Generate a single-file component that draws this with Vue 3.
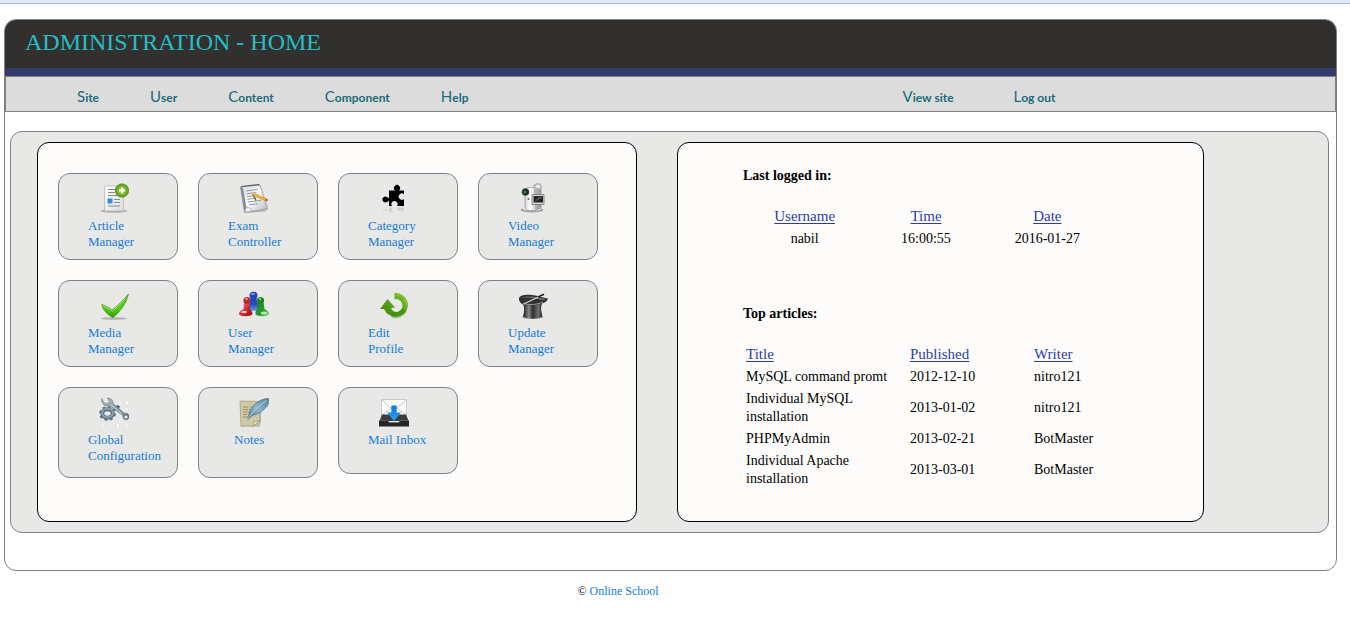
<script setup>
const mainMenu = ['Site', 'User', 'Content', 'Component', 'Help']
const sideMenu = ['View site', 'Log out']

const cards = [
  { icon: 'article', lines: ['Article', 'Manager'] },
  { icon: 'exam', lines: ['Exam', 'Controller'] },
  { icon: 'puzzle', lines: ['Category', 'Manager'] },
  { icon: 'video', lines: ['Video', 'Manager'] },
  { icon: 'check', lines: ['Media', 'Manager'] },
  { icon: 'users', lines: ['User', 'Manager'] },
  { icon: 'refresh', lines: ['Edit', 'Profile'] },
  { icon: 'hat', lines: ['Update', 'Manager'] },
  { icon: 'tools', lines: ['Global', 'Configuration'], tall: true },
  { icon: 'notes', lines: ['Notes'], tall: true, inset: true },
  { icon: 'inbox', lines: ['Mail Inbox'] },
]

const logins = [{ user: 'nabil', time: '16:00:55', date: '2016-01-27' }]

const articles = [
  { title: 'MySQL command promt', published: '2012-12-10', writer: 'nitro121' },
  { title: 'Individual MySQL installation', published: '2013-01-02', writer: 'nitro121' },
  { title: 'PHPMyAdmin', published: '2013-02-21', writer: 'BotMaster' },
  { title: 'Individual Apache installation', published: '2013-03-01', writer: 'BotMaster' },
]
</script>

<template>
  <div class="page">
    <svg class="sprite" width="0" height="0" aria-hidden="true">
      <defs>
        <linearGradient id="g-paper" x1="0" y1="0" x2="1" y2="1">
          <stop offset="0" stop-color="#ffffff" /><stop offset="1" stop-color="#dcdcde" />
        </linearGradient>
        <linearGradient id="g-pad" x1="0" y1="0" x2="1" y2="1">
          <stop offset="0" stop-color="#d4d6da" /><stop offset="0.5" stop-color="#fafafa" /><stop offset="1" stop-color="#b4bac0" />
        </linearGradient>
        <radialGradient id="g-add" cx="0.5" cy="0.5" r="0.5">
          <stop offset="0" stop-color="#c4e67c" /><stop offset="0.6" stop-color="#7cb82c" /><stop offset="1" stop-color="#4f8f14" />
        </radialGradient>
        <linearGradient id="g-check" x1="0" y1="0" x2="0" y2="1">
          <stop offset="0" stop-color="#4fb81a" /><stop offset="0.6" stop-color="#58cf18" /><stop offset="1" stop-color="#2f9a08" />
        </linearGradient>
        <linearGradient id="g-cam" x1="0" y1="0" x2="1" y2="0">
          <stop offset="0" stop-color="#c4c4c4" /><stop offset="0.4" stop-color="#ffffff" /><stop offset="1" stop-color="#a8a8a8" />
        </linearGradient>
        <linearGradient id="g-red" x1="0" y1="0" x2="1" y2="1">
          <stop offset="0" stop-color="#f09090" /><stop offset="0.5" stop-color="#c83038" /><stop offset="1" stop-color="#8c1018" />
        </linearGradient>
        <linearGradient id="g-green" x1="0" y1="0" x2="1" y2="1">
          <stop offset="0" stop-color="#1c7a1c" /><stop offset="0.6" stop-color="#2c9c2c" /><stop offset="1" stop-color="#90d888" />
        </linearGradient>
        <linearGradient id="g-blue" x1="0" y1="0" x2="0" y2="1">
          <stop offset="0" stop-color="#1c3cb0" /><stop offset="0.5" stop-color="#2c50c0" /><stop offset="1" stop-color="#5c9cf0" />
        </linearGradient>
        <linearGradient id="g-ring" x1="1" y1="0" x2="0" y2="1">
          <stop offset="0" stop-color="#7cc428" /><stop offset="1" stop-color="#3c8010" />
        </linearGradient>
        <linearGradient id="g-hat" x1="0" y1="0" x2="1" y2="0">
          <stop offset="0" stop-color="#141414" /><stop offset="0.3" stop-color="#8a8a8a" /><stop offset="0.5" stop-color="#303030" /><stop offset="0.8" stop-color="#707070" /><stop offset="1" stop-color="#101010" />
        </linearGradient>
        <linearGradient id="g-steel" x1="0" y1="0" x2="1" y2="1">
          <stop offset="0" stop-color="#b8c4cc" /><stop offset="1" stop-color="#5c7080" />
        </linearGradient>
        <linearGradient id="g-feather" x1="1" y1="0" x2="0" y2="1">
          <stop offset="0" stop-color="#52809c" /><stop offset="0.5" stop-color="#8cb4cc" /><stop offset="1" stop-color="#4c7894" />
        </linearGradient>
        <linearGradient id="g-arrow" x1="0" y1="0" x2="0" y2="1">
          <stop offset="0" stop-color="#1478d0" /><stop offset="1" stop-color="#28a0f8" />
        </linearGradient>
      </defs>

      <symbol id="icon-article" viewBox="0 0 30 30">
        <ellipse cx="15" cy="28" rx="13.5" ry="1.8" fill="#999" opacity=".65" />
        <path d="M5.5 3h19v25h-19z" fill="url(#g-paper)" stroke="#b0b0b0" stroke-width=".7" />
        <path d="M9 6.5h8M9 9.5h7M9 12.5h12M15 16.5h6M15 19.5h6M9 23h12" stroke="#8c8c8c" />
        <path d="M8.5 15.5h5v5h-5z" fill="#2e8ee0" />
        <circle cx="23" cy="7.5" r="6.8" fill="url(#g-add)" stroke="#5c9820" stroke-width=".6" />
        <path d="M23 4.500v6M20 7.500h6" stroke="#fff" stroke-width="2" />
      </symbol>

      <symbol id="icon-exam" viewBox="0 0 30 30">
        <path d="M4 28.500 29 26l-3 2.500L6 30z" fill="#999" opacity=".6" />
        <path d="M1.500 4 21 2l7.500 23.500-9 2L5.500 29z" fill="url(#g-pad)" stroke="#8c9298" stroke-width=".8" />
        <path d="M1.500 4 5.500 29l2-4L4 5z" fill="#858c94" />
        <path d="M7.500 24c3 0 5 2 5.500 4.500L5.500 29z" fill="#eef0f2" stroke="#8c9298" stroke-width=".6" />
        <path d="m7 8 11.500-1.500M7.500 10.800l10-1.300M8 13.500l12-1.500M8.500 16.300l8-1M9 19l13-1.600M10 21.800l9-1" stroke="#8a9096" stroke-width=".9" />
        <path d="M2 3.500 20.500 1.500" stroke="#5c6268" stroke-width="1.200" />
        <path d="m14 11.500 3 6" stroke="#50565c" stroke-width="1.300" />
        <path d="m13 11 2.800-.2L28 16.200l-.8 1.800L15 13z" fill="#f8b828" stroke="#c88414" stroke-width=".5" />
        <path d="m26.800 15.700 2.200.9-.8 1.900-2.200-.9z" fill="#d84c28" />
      </symbol>

      <symbol id="icon-puzzle" viewBox="0 0 30 30">
        <path d="M10 7.500h6.200A3 3 0 1 1 19.800 7.500H25v3.700A3.200 3.200 0 1 0 25 16v7h-7A3.100 3.100 0 1 0 13 23h-3v-5.500c-.8.500-1 1.500-3 1.800A2.900 2.900 0 1 1 7 13.700c1.800.2 2 1.300 3 1.300z" fill="#000" />
        <path d="M10 24.500h3v4h-3zM18 24.500h7v3h-7z" fill="#999" opacity=".3" />
        <path d="M4 26.500h4v1.500H4zM12 28.500h3v1h-3z" fill="#999" opacity=".25" />
      </symbol>

      <symbol id="icon-video" viewBox="0 0 30 30">
        <ellipse cx="13" cy="27" rx="11.500" ry="2.500" fill="#8c8c8c" opacity=".75" />
        <ellipse cx="13" cy="26" rx="9" ry="1.800" fill="#f0f0f0" />
        <circle cx="18.500" cy="4.500" r="4" fill="#c8c8c8" stroke="#999" stroke-width=".7" />
        <circle cx="19" cy="3.500" r="1.800" fill="#f0f0f0" />
        <path d="M4 7.500C6 4.500 11 4 16 5l6 2v18l-6 2.500H8L6 24V13z" fill="url(#g-cam)" stroke="#909090" stroke-width=".7" />
        <path d="m15 6 7 1.500V25l-6 2.500z" fill="#909090" opacity=".5" />
        <circle cx="6.500" cy="9" r="3.600" fill="#202420" stroke="#777" stroke-width=".5" />
        <circle cx="6" cy="9" r="1.600" fill="#2c8c3c" />
        <circle cx="9.500" cy="16" r="1" fill="#666" />
        <path d="M13 11.500h12v10H13z" fill="#d8d8d8" stroke="#666" stroke-width=".7" />
        <path d="M14.500 13h9.500v6.500h-9.500z" fill="#262626" />
        <path d="m15.500 19 4-5h4z" fill="#5a5a5a" />
      </symbol>

      <symbol id="icon-check" viewBox="0 0 30 30">
        <ellipse cx="15" cy="28.500" rx="13" ry="1.300" fill="#888" opacity=".55" />
        <path d="M2.800 14.500C6.500 15.500 10 17.500 13 20 18 16.500 24 10.500 29.500 4 27.500 13 21.500 21.500 14 27.700 8.500 24.500 4 20.500 2.800 14.500z" fill="url(#g-check)" stroke="#388c10" stroke-width=".6" />
        <path d="M4 15.800c3.500 1 6.500 3 9.200 5.400C18 17.500 22.500 13 27 8" fill="none" stroke="#b4ec80" stroke-width=".8" />
      </symbol>

      <symbol id="icon-users" viewBox="0 0 30 30">
        <path d="M11.500 8h6l.5 4 4.500 7c-2 2.500-13 2.500-15.500 0l4-7z" fill="url(#g-blue)" />
        <ellipse cx="14.500" cy="5.500" rx="4" ry="3.700" fill="#2444b4" />
        <ellipse cx="14" cy="4" rx="2" ry="1" fill="#7ca0f0" />
        <path d="M5 12.500 4.500 19C1 20.500 0 22.500 0 24c1 3 12 3 13.500 0 0-2-1-4-2.500-5v-6.500z" fill="url(#g-red)" />
        <circle cx="8" cy="10.500" r="3.600" fill="#b42832" />
        <path d="M18.500 12.500V19c-1.500 1-2.500 3-2 5 1.500 3 12.500 3 13.500 0-.2-2-1.500-3.500-4.500-5l-1-6.500z" fill="url(#g-green)" />
        <circle cx="21.500" cy="10.500" r="3.600" fill="#1e8524" />
        <circle cx="7.500" cy="9" r="1.200" fill="#f0a0a0" />
        <circle cx="21" cy="9" r="1.200" fill="#84d080" />
        <ellipse cx="5" cy="22" rx="3" ry="1.300" fill="#f4b4b4" />
        <ellipse cx="25" cy="23" rx="3" ry="1.500" fill="#b0e8a4" />
      </symbol>

      <symbol id="icon-refresh" viewBox="0 0 30 30">
        <path d="M15.500 3C23 2.500 29 8.500 29 15.500a12.500 12.500 0 0 1-24 3.500H1l7.500-10L16 17.500l-4 .5c1 2.500 3 4 5 4a6.500 6.500 0 0 0 0-13l-1.500.2z" fill="url(#g-ring)" />
        <path d="M16.500 4.500c6 0 11 4.500 11 11" fill="none" stroke="#9cd458" stroke-width="1" opacity=".7" />
        <path d="m12 25.500 3-4c4 1.500 7 0 8-3l5 2C25 27 18 30 12 27z" fill="#3c820c" opacity=".45" />
      </symbol>

      <symbol id="icon-hat" viewBox="0 0 30 30">
        <ellipse cx="13.500" cy="27.500" rx="11" ry="1.500" fill="#888" opacity=".6" />
        <path d="M4 13h19c-1.500 4-1 9 .5 13.500-4 3-15.500 3-19.500 0C5.500 22 5.500 17 4 13z" fill="url(#g-hat)" />
        <path d="M0 8c1-3 7-4 13-3 5 .5 9 2.500 16 3.500-1 3-3 4-6 5-7 2-14 2.500-19 1C1.500 13.500-.5 11 0 8z" fill="#303030" />
        <path d="M2 8c4-2 10-2 16-.5 3 .7 6 1 9 1.500-3 1.500-5 1-8 0C13 8 7 7 2 8z" fill="#747474" />
        <path d="M4 13.500C9 15 18 15 24 12" fill="none" stroke="#a8a8a8" stroke-width=".9" />
        <path d="M4.500 14 25 4.500" stroke="#d8d8d8" stroke-width="1.300" />
        <path d="m19 7 6-2.800" stroke="#202020" stroke-width="1.500" />
      </symbol>

      <symbol id="icon-tools" viewBox="0 0 30 30">
        <ellipse cx="8.500" cy="16.500" rx="5.200" ry="4.200" fill="none" stroke="#5c7282" stroke-width="4" />
        <ellipse cx="8.500" cy="16.500" rx="7.300" ry="6.200" fill="none" stroke="#5c7282" stroke-width="2.200" stroke-dasharray="2.800 2.500" />
        <ellipse cx="8.500" cy="16" rx="5.400" ry="4.300" fill="none" stroke="#8fa4b0" stroke-width="1.800" />
        <path d="m18 8 3 1.500L18.500 14 15 12z" fill="#455a68" />
        <path d="M3 1.500C2 5 4 8.500 7.500 9L11 9l13 9.500c-1 4 4 6 6 2.500 1-4-2-5.500-4.500-4.500L14 6.500C14 3 12 1 8.500 1l2 3.500L8 7 4.500 5.500z" fill="url(#g-steel)" stroke="#5c707c" stroke-width=".6" />
        <circle cx="27" cy="20" r="1.600" fill="#e8e8e6" />
        <path d="m12 8 11.500 9" stroke="#dce4e8" stroke-width=".8" />
        <path d="M20 5.500h2v1h-2zM27 5h2v2h-2zM28 11.500h1v2h-1zM3 28.500h2v1H3zM18 27.500h2v2h-2zM27 28h2v1h-2zM12 27h1v1h-1z" fill="#fff" />
      </symbol>

      <symbol id="icon-notes" viewBox="0 0 30 30">
        <path d="M2 28.500 20 30l2-3V6z" fill="#888" opacity=".45" />
        <path d="m1 4 19.500.5L21 24l-6.500 5L2 29.300z" fill="#cfc8a4" stroke="#a09a78" stroke-width=".7" />
        <path d="m21 24-6 .5-.5 4.500z" fill="#eee8c8" stroke="#8c8664" stroke-width=".6" />
        <path d="M4 10h5M11 10h4M4 12.500h5M10 12.500h4M4 15h6M4 17.500h4M4 20h5" stroke="#9a946e" stroke-width="1" />
        <path d="M29.500 1.500c1 4-.5 7-3 9.500-3 3-7 6-13 7.500L8.500 23 10 17c1-5 4-8.500 8-11.500 3.500-2.500 7-4 11.500-4z" fill="url(#g-feather)" stroke="#406880" stroke-width=".6" />
        <path d="M27.500 3.500C20 8.500 14 14 8 23" fill="none" stroke="#cde0ea" stroke-width=".8" />
      </symbol>

      <symbol id="icon-inbox" viewBox="0 0 30 30">
        <path d="M2.500 2.500h25V20h-25z" fill="#fafafa" stroke="#c0c0c0" stroke-width=".8" />
        <path d="m3 3 12 11L27 3M3 18l9-7M27 18l-9-7" fill="none" stroke="#c4c4c4" />
        <path d="M3 17.500h24l2.500 6.500h-29z" fill="#3c3c3e" />
        <path d="M0 23.500h9l1 2h10l1-2h9V29.500H0z" fill="#252527" />
        <path d="M.5 23.500H9l1 2h10l1-2h8.500" fill="none" stroke="#6c6c70" stroke-width=".7" />
        <path d="M12.300 8.500h5.400v7H22L15 24l-7-8.500h4.300z" fill="url(#g-arrow)" />
      </symbol>
    </svg>

    <div class="strip"></div>

    <div class="shell">
      <header class="banner">
        <h1>ADMINISTRATION - HOME</h1>
      </header>

      <nav class="menu" aria-label="Administration">
        <ul class="main-menu">
          <li v-for="item in mainMenu" :key="item"><a href="#">{{ item }}</a></li>
        </ul>
        <ul class="side-menu">
          <li v-for="item in sideMenu" :key="item"><a href="#">{{ item }}</a></li>
        </ul>
      </nav>

      <main class="panel">
        <ul class="box cards">
          <li v-for="card in cards" :key="card.icon">
            <a href="#" class="card" :class="{ tall: card.tall, inset: card.inset }">
              <svg class="icon" aria-hidden="true"><use :href="'#icon-' + card.icon" /></svg>
              <span v-for="line in card.lines" :key="line" class="line">{{ line }}</span>
            </a>
          </li>
        </ul>

        <div class="box reports">
          <section>
            <h2>Last logged in:</h2>
            <table class="logins">
              <thead>
                <tr>
                  <th scope="col"><a href="#">Username</a></th>
                  <th scope="col"><a href="#">Time</a></th>
                  <th scope="col"><a href="#">Date</a></th>
                </tr>
              </thead>
              <tbody>
                <tr v-for="row in logins" :key="row.user">
                  <td>{{ row.user }}</td>
                  <td>{{ row.time }}</td>
                  <td>{{ row.date }}</td>
                </tr>
              </tbody>
            </table>
          </section>

          <section>
            <h2>Top articles:</h2>
            <table class="articles">
              <thead>
                <tr>
                  <th scope="col" class="title-col"><a href="#">Title</a></th>
                  <th scope="col" class="date-col"><a href="#">Published</a></th>
                  <th scope="col"><a href="#">Writer</a></th>
                </tr>
              </thead>
              <tbody>
                <tr v-for="row in articles" :key="row.title">
                  <td>{{ row.title }}</td>
                  <td>{{ row.published }}</td>
                  <td>{{ row.writer }}</td>
                </tr>
              </tbody>
            </table>
          </section>
        </div>
      </main>
    </div>

    <footer class="footer">© <a href="#">Online School</a></footer>
  </div>
</template>

<style>
body {
  background: #fff;
}
</style>

<style scoped>
.page {
  font-family: "Liberation Serif", "Times New Roman", serif;
  font-size: 14px;
  line-height: 18px;
  color: #000;
}

.page * {
  box-sizing: border-box;
}

.sprite {
  position: absolute;
}

ul {
  margin: 0;
  padding: 0;
  list-style: none;
}

a {
  color: #167bdc;
  text-decoration: none;
}

.strip {
  height: 4px;
  background: #dbe8f8;
  border-bottom: 1px solid #a2bad2;
}

.shell {
  margin: 15px 13px 0 4px;
  padding-bottom: 37px;
  border: 1px solid #808080;
  border-radius: 12px;
  overflow: hidden;
}

.banner {
  padding: 10px 20px 14px;
  background: #32302e;
  border-bottom: 8px solid #333b6d;
}

.banner h1 {
  margin: 0;
  font-size: 24px;
  line-height: 24px;
  font-weight: 400;
  color: #26bdc6;
}

.menu {
  display: flex;
  justify-content: space-between;
  padding: 10px 21% 4px 71px;
  background: #dcdcdc;
  border: 1px solid #808080;
  font-family: Lato, sans-serif;
  font-size: 12px;
  font-weight: 700;
}

.main-menu,
.side-menu {
  display: flex;
  gap: 51px;
}

.side-menu {
  gap: 60px;
}

.menu a {
  display: block;
  color: #1b6b7b;
}

.menu a::first-letter {
  font-size: 15px;
  font-weight: 400;
}

.panel {
  display: grid;
  grid-template-columns: 600fr 527fr;
  gap: 40px;
  margin: 19px 7px 0 5px;
  padding: 10px 124px 10px 26px;
  background: #e8e8e6;
  border: 1px solid #808080;
  border-radius: 12px;
}

.box {
  background: #fdfcfa;
  border: 1px solid #000;
  border-radius: 12px;
}

.cards {
  display: grid;
  grid-template-columns: repeat(auto-fill, 120px);
  gap: 20px;
  align-content: start;
  padding: 30px 20px 43px;
}

.card {
  display: block;
  min-height: 87px;
  padding: 9px 10px 9px 29px;
  background: #e8e8e6;
  border: 1px solid #808080;
  border-radius: 12px;
  font-size: 13px;
  line-height: 16px;
  white-space: nowrap;
}

.card.tall {
  min-height: 91px;
}

.card.inset {
  padding-left: 35px;
}

.icon {
  display: block;
  width: 30px;
  height: 30px;
  margin: 0 0 5px 11px;
}

.inset .icon {
  margin-left: 5px;
}

.line {
  display: block;
}

.reports {
  padding: 24px 20px 20px 65px;
}

.reports section + section {
  margin-top: 54px;
}

h2 {
  margin: 0 0 20px;
  font-size: 14px;
  line-height: 18px;
  font-weight: 700;
}

table {
  width: 370px;
  max-width: 100%;
  table-layout: fixed;
  border-collapse: separate;
  border-spacing: 2px;
}

.logins {
  width: 366px;
}

th,
td {
  padding: 1px;
  text-align: left;
  vertical-align: middle;
}

th {
  padding: 0 1px 2px;
  font-size: 15px;
  font-weight: 400;
}

th a {
  color: #2c3da8;
  text-decoration: underline;
  text-underline-offset: 2px;
}

.logins th,
.logins td {
  text-align: center;
}

.title-col {
  width: 162px;
}

.date-col {
  width: 122px;
}

.footer {
  margin-top: 12px;
  padding-right: 114px;
  font-size: 12px;
  line-height: 16px;
  text-align: center;
}
</style>
